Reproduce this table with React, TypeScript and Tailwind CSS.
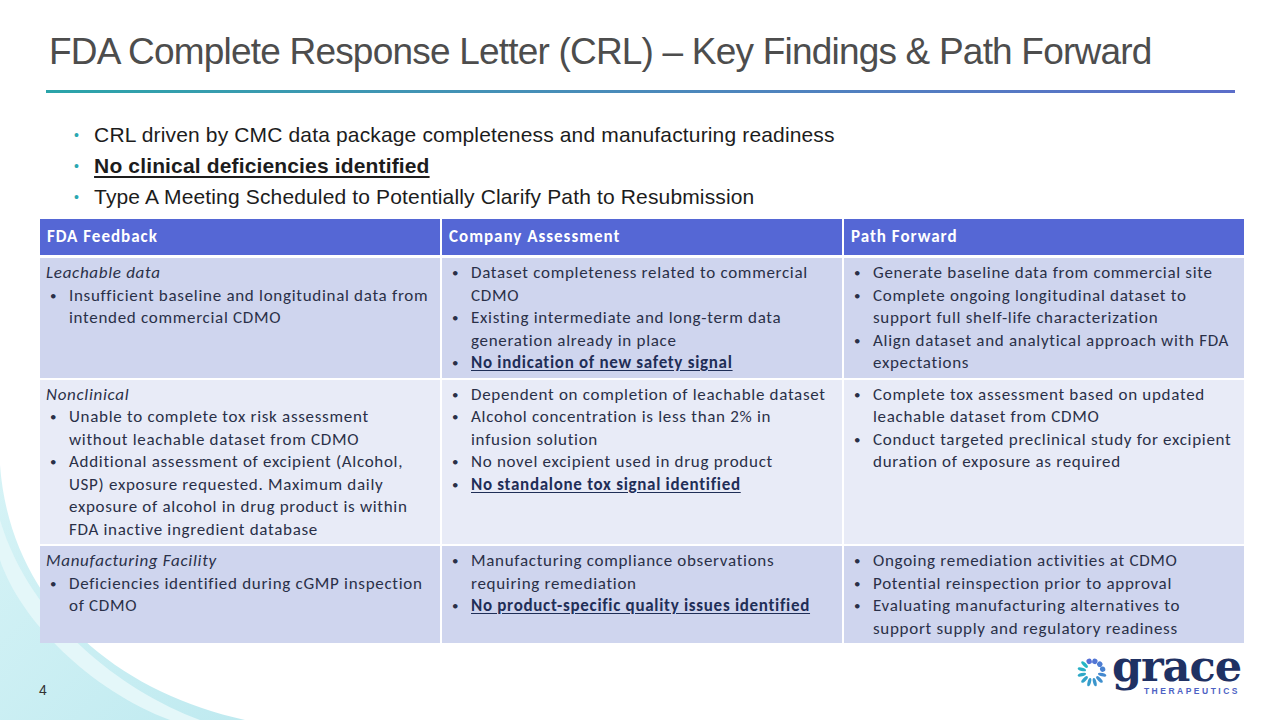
import React from "react";

type Item = { text: string; strong?: boolean };
type Cell = { heading?: string; items: Item[] };

const rows: { bg: string; cells: Cell[] }[] = [
  {
    bg: "bg-[#cfd5ee]",
    cells: [
      {
        heading: "Leachable data",
        items: [{ text: "Insufficient baseline and longitudinal data from intended commercial CDMO" }],
      },
      {
        items: [
          { text: "Dataset completeness related to commercial CDMO" },
          { text: "Existing intermediate and long-term data generation already in place" },
          { text: "No indication of new safety signal", strong: true },
        ],
      },
      {
        items: [
          { text: "Generate baseline data from commercial site" },
          { text: "Complete ongoing longitudinal dataset to support full shelf-life characterization" },
          { text: "Align dataset and analytical approach with FDA expectations" },
        ],
      },
    ],
  },
  {
    bg: "bg-[#e8ebf7]",
    cells: [
      {
        heading: "Nonclinical",
        items: [
          { text: "Unable to complete tox risk assessment without leachable dataset from CDMO" },
          {
            text: "Additional assessment of excipient (Alcohol, USP) exposure requested. Maximum daily exposure of alcohol in drug product is within FDA inactive ingredient database",
          },
        ],
      },
      {
        items: [
          { text: "Dependent on completion of leachable dataset" },
          { text: "Alcohol concentration is less than 2% in infusion solution" },
          { text: "No novel excipient used in drug product" },
          { text: "No standalone tox signal identified", strong: true },
        ],
      },
      {
        items: [
          { text: "Complete tox assessment based on updated leachable dataset from CDMO" },
          { text: "Conduct targeted preclinical study for excipient duration of exposure as required" },
        ],
      },
    ],
  },
  {
    bg: "bg-[#cfd5ee]",
    cells: [
      {
        heading: "Manufacturing Facility",
        items: [{ text: "Deficiencies identified during cGMP inspection of CDMO" }],
      },
      {
        items: [
          { text: "Manufacturing compliance observations requiring remediation" },
          { text: "No product-specific quality issues identified", strong: true },
        ],
      },
      {
        items: [
          { text: "Ongoing remediation activities at CDMO" },
          { text: "Potential reinspection prior to approval" },
          { text: "Evaluating manufacturing alternatives to support supply and regulatory readiness" },
        ],
      },
    ],
  },
];

const bullets = [
  { text: "CRL driven by CMC data package completeness and manufacturing readiness" },
  { text: "No clinical deficiencies identified", strong: true },
  { text: "Type A Meeting Scheduled to Potentially Clarify Path to Resubmission" },
];

function Logo() {
  const petals = Array.from({ length: 12 }, (_, i) => i);
  return (
    <div className="relative flex items-start">
      <svg width="32" height="34" viewBox="-16 -17 32 34" className="mr-[4px] mt-[9px]">
        {petals.map((i) => {
          // dots at the top right, petals round the rest
          const a = -15 + i * 30;
          const round = i < 4;
          const t = i / 11;
          const r = Math.round(86 + (38 - 86) * t);
          const g = Math.round(112 + (182 - 112) * t);
          const b = Math.round(214 + (196 - 214) * t);
          return (
            <ellipse
              key={i}
              cx="0"
              cy={round ? -11 : -10.5}
              rx={round ? 2.7 : 1.7}
              ry={round ? 2.7 : 4.3}
              fill={`rgb(${r},${g},${b})`}
              transform={`rotate(${a})`}
            />
          );
        })}
      </svg>
      <span className="mt-[1px] font-['DejaVu_Serif',serif] text-[43px] font-bold leading-[38px] tracking-[-1px] text-[#1f3163]">
        grace
      </span>
      <span className="absolute right-[1px] top-[41px] font-['Liberation_Sans',sans-serif] text-[8.5px] font-bold leading-[9px] tracking-[2.5px] text-[#4d62c4]">
        THERAPEUTICS
      </span>
    </div>
  );
}

export default function App() {
  return (
    <div className="relative h-[720px] w-[1280px] overflow-hidden bg-white">
      {/* background wave */}
      <svg className="absolute inset-0" width="1280" height="720" viewBox="0 0 1280 720">
        <defs>
          <linearGradient id="wave" x1="0" y1="0" x2="1" y2="1">
            <stop offset="0" stopColor="#d6f3f6" />
            <stop offset="1" stopColor="#bfeaf0" />
          </linearGradient>
        </defs>
        <path d="M0 465 C 10 600, 110 690, 245 720 L 0 720 Z" fill="url(#wave)" />
        <path d="M0 520 C 30 620, 120 690, 200 720 L 170 720 C 90 690, 20 620, 0 560 Z" fill="#e4f7f9" />
      </svg>

      <div className="relative flex flex-col font-['Liberation_Sans',Arial,sans-serif]">
        <h1 className="ml-[49px] mt-[30px] text-[37px] font-normal leading-[44px] tracking-[-0.8px] text-[#4d4d4d]">
          FDA Complete Response Letter (CRL) – Key Findings &amp; Path Forward
        </h1>
        <div className="ml-[46px] mt-[16px] h-[3px] w-[1189px] bg-gradient-to-r from-[#2aa4a9] to-[#5b6dc9]" />

        <ul className="ml-[74px] mt-[30px] flex flex-col gap-[7px] text-[21px] leading-[24px] tracking-[0.15px] text-[#1c1c1c]">
          {bullets.map((b) => (
            <li key={b.text} className="flex items-center gap-[15px]">
              <span className="text-[14px] text-[#2aa7b0]">•</span>
              <span className={b.strong ? "font-bold underline underline-offset-[3px]" : ""}>{b.text}</span>
            </li>
          ))}
        </ul>

        <div className="ml-[40px] mt-[10px] w-[1204px] font-['Carlito',Lato,sans-serif] text-[17px] leading-[22.5px] tracking-[0.7px] text-[#2a3048]">
          <div className="grid grid-cols-3 gap-x-[2px] border-b-[3px] border-white">
            {["FDA Feedback", "Company Assessment", "Path Forward"].map((h) => (
              <div
                key={h}
                className="flex h-[36px] items-center bg-[#5567d5] px-[7px] text-[17px] font-bold tracking-[1px] text-white"
              >
                {h}
              </div>
            ))}
          </div>
          {rows.map((row, ri) => (
            <div key={ri} className="grid grid-cols-3 gap-x-[2px] border-b-2 border-white last:border-b-0">
              {row.cells.map((cell, ci) => (
                <div key={ci} className={`${row.bg} pb-[3px] pl-[6px] pr-[11px] pt-[4px]`}>
                  {cell.heading && <div className="italic">{cell.heading}</div>}
                  <ul>
                    {cell.items.map((it, ii) => (
                      <li key={ii} className="flex">
                        <span className="w-[23px] shrink-0 pl-[4px] text-[13px]">•</span>
                        <span className={it.strong ? "font-bold text-[#1f2e57] underline underline-offset-2" : ""}>
                          {it.text}
                        </span>
                      </li>
                    ))}
                  </ul>
                </div>
              ))}
            </div>
          ))}
        </div>

        <div className="mt-[3px] flex items-start justify-between pl-[39px] pr-[39px]">
          <span className="mt-[34px] text-[14px] text-[#333]">4</span>
          <Logo />
        </div>
      </div>
    </div>
  );
}
